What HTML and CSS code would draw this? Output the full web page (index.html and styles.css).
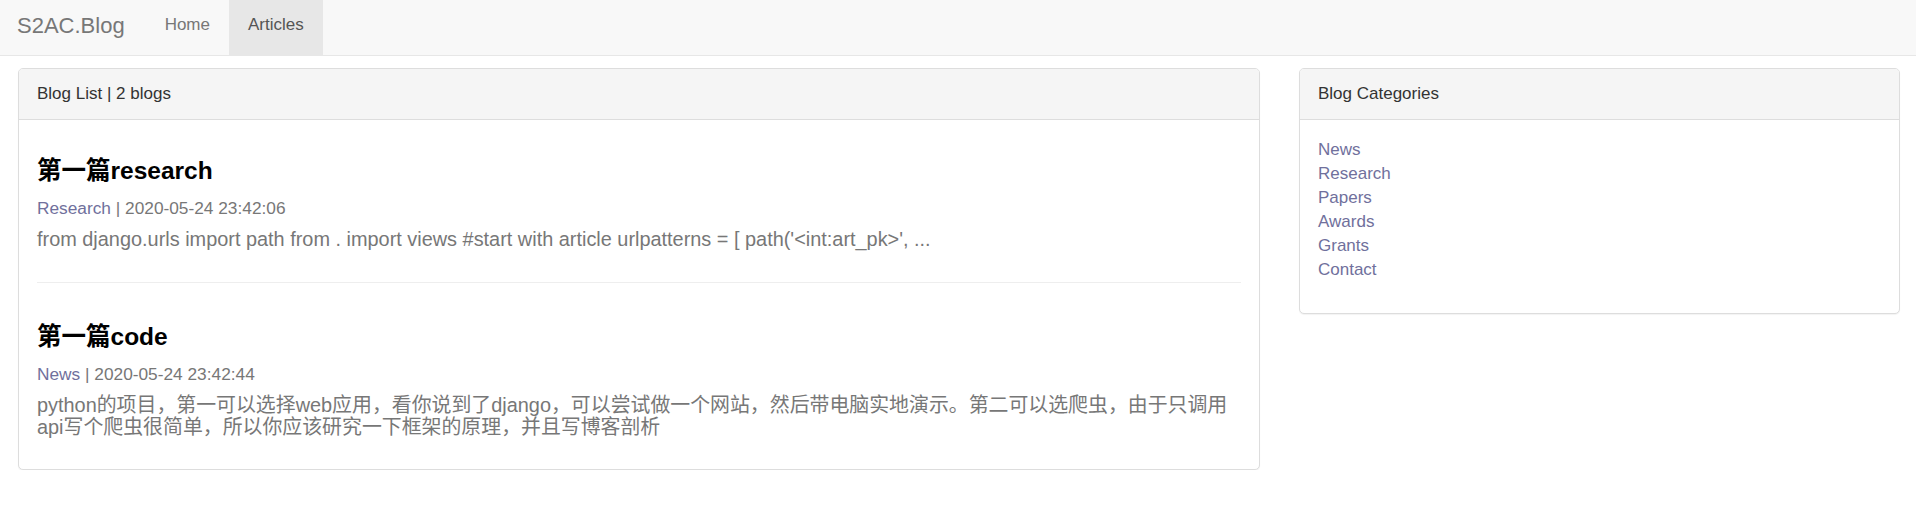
FILE: index.html
```html
<!DOCTYPE html>
<html lang="zh-CN">
<head>
<meta charset="utf-8">
<title>S2AC.Blog - Articles</title>
<link rel="stylesheet" href="styles.css">
</head>
<body>
<nav class="navbar">
  <a class="brand" href="#">S2AC.Blog</a>
  <ul class="nav">
    <li><a href="#">Home</a></li>
    <li class="active"><a href="#">Articles</a></li>
  </ul>
</nav>
<div class="page">
  <main class="main-col">
    <section class="panel">
      <div class="panel-heading">Blog List | 2 blogs</div>
      <div class="panel-body post-list">
        <article class="post">
          <h3 class="post-title">第一篇research</h3>
          <div class="post-meta"><a href="#">Research</a> | 2020-05-24 23:42:06</div>
          <p class="post-excerpt">from django.urls import path from . import views #start with article urlpatterns = [ path('&lt;int:art_pk&gt;', ...</p>
        </article>
        <hr class="divider">
        <article class="post">
          <h3 class="post-title">第一篇code</h3>
          <div class="post-meta"><a href="#">News</a> | 2020-05-24 23:42:44</div>
          <p class="post-excerpt">python的项目，第一可以选择web应用，看你说到了django，可以尝试做一个网站，然后带电脑实地演示。第二可以选爬虫，由于只调用api写个爬虫很简单，所以你应该研究一下框架的原理，并且写博客剖析</p>
        </article>
      </div>
    </section>
  </main>
  <aside class="side-col">
    <section class="panel">
      <div class="panel-heading">Blog Categories</div>
      <div class="panel-body">
        <ul class="cat-list">
          <li><a href="#">News</a></li>
          <li><a href="#">Research</a></li>
          <li><a href="#">Papers</a></li>
          <li><a href="#">Awards</a></li>
          <li><a href="#">Grants</a></li>
          <li><a href="#">Contact</a></li>
        </ul>
      </div>
    </section>
  </aside>
</div>
</body>
</html>
```
FILE: styles.css
```css
html, body {
  margin: 0;
  padding: 0;
  background: #fff;
}
body {
  font-family: "Liberation Sans", Arial, "Noto Sans CJK SC", sans-serif;
  font-size: 17px;
  line-height: 24px;
  color: #333;
}
a {
  text-decoration: none;
}

/* navbar */
.navbar {
  display: flex;
  align-items: stretch;
  height: 55px;
  background: #f8f8f8;
  border-bottom: 1px solid #e7e7e7;
}
.brand {
  display: block;
  font-size: 22px;
  line-height: 24px;
  padding: 14px 21px 17px 17px;
  color: #777;
}
.nav {
  display: flex;
  list-style: none;
  margin: 0;
  padding: 0;
}
.nav a {
  display: block;
  height: 100%;
  box-sizing: border-box;
  padding: 13px 19px 18px;
  font-size: 17px;
  line-height: 24px;
  color: #777;
}
.nav .active a {
  background: #e7e7e7;
  color: #555;
}

/* page layout */
.page {
  display: flex;
  align-items: flex-start;
  gap: 39px;
  padding: 12px 16px 0 18px;
}
.main-col {
  width: 1242px;
  flex: none;
}
.side-col {
  flex: 1;
  min-width: 0;
}

/* panels */
.panel {
  background: #fff;
  border: 1px solid #ddd;
  border-radius: 5px;
  box-shadow: 0 1px 1px rgba(0, 0, 0, 0.05);
}
.panel-heading {
  padding: 13px 18px;
  background: #f5f5f5;
  border-bottom: 1px solid #ddd;
  border-radius: 4px 4px 0 0;
  color: #333;
}
.panel-body {
  padding: 18px 18px 20px;
}
.post-list {
  display: flex;
  flex-direction: column;
}
.post {
  display: flex;
  flex-direction: column;
}
.post-title {
  margin: 20px 0 12px;
  font-size: 24.5px;
  line-height: 26px;
  font-weight: bold;
  color: #000;
}
.post-meta {
  font-size: 17.3px;
  line-height: 24px;
  color: #777;
}
.post-meta a,
.cat-list a {
  color: #70709c;
}
.post-excerpt {
  margin: 9px 0 11px;
  font-size: 19.9px;
  line-height: 21.5px;
  color: #777;
}
.divider {
  margin: 20px 0 21.5px;
  border: 0;
  border-top: 1px solid #eee;
  height: 0;
}

.cat-list {
  list-style: none;
  margin: 0 0 11px;
  padding: 0;
}
.cat-list li {
  line-height: 24px;
}
```
